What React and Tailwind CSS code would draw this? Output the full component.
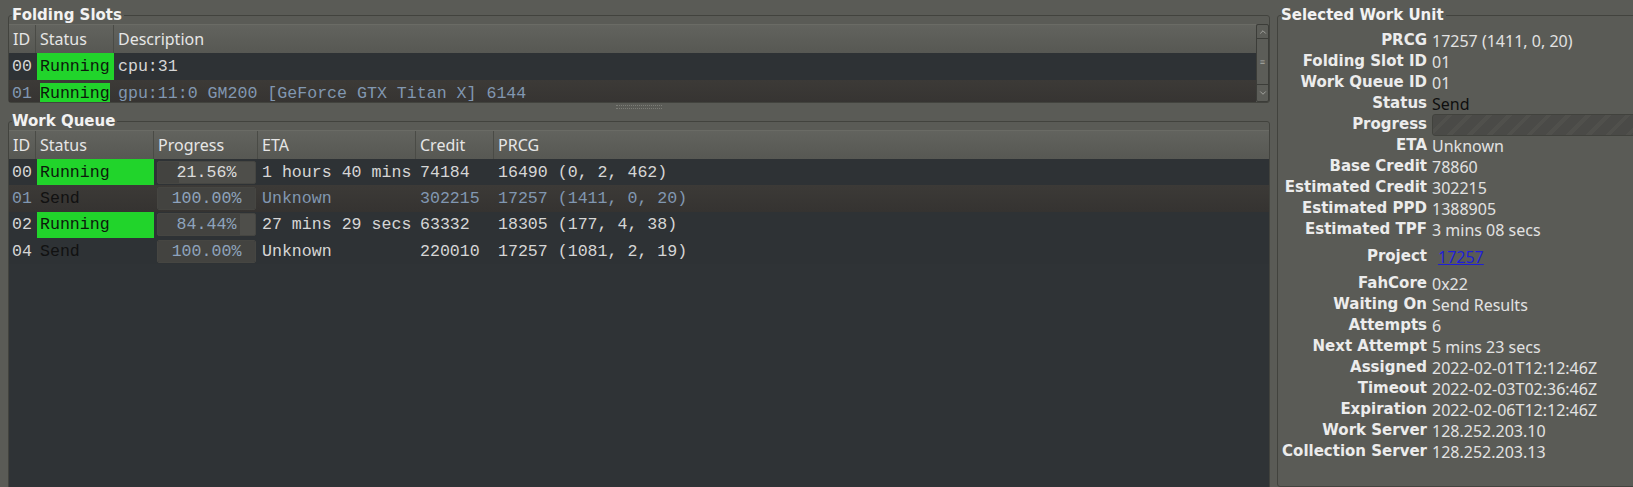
import React from 'react';
import { ChevronUp, ChevronDown } from 'lucide-react';

const MONO = "font-['Liberation_Mono',monospace] text-[16.6px]";
const SANS = "font-['Noto_Sans',sans-serif] text-[16px]";
const BOLD = "font-['DejaVu_Sans',sans-serif] font-bold text-[15px]";

const slots = [
  { id: '00', status: 'Running', desc: 'cpu:31' },
  { id: '01', status: 'Running', desc: 'gpu:11:0 GM200 [GeForce GTX Titan X] 6144', selected: true },
];

const queue = [
  { id: '00', status: 'Running', progress: 21.56, eta: '1 hours 40 mins', credit: '74184', prcg: '16490 (0, 2, 462)' },
  { id: '01', status: 'Send', progress: 100, eta: 'Unknown', credit: '302215', prcg: '17257 (1411, 0, 20)', selected: true },
  { id: '02', status: 'Running', progress: 84.44, eta: '27 mins 29 secs', credit: '63332', prcg: '18305 (177, 4, 38)' },
  { id: '04', status: 'Send', progress: 100, eta: 'Unknown', credit: '220010', prcg: '17257 (1081, 2, 19)' },
];

const details = [
  ['PRCG', '17257 (1411, 0, 20)'],
  ['Folding Slot ID', '01'],
  ['Work Queue ID', '01'],
  ['Status', 'Send', 'dark'],
  ['Progress', null, 'bar'],
  ['ETA', 'Unknown'],
  ['Base Credit', '78860'],
  ['Estimated Credit', '302215'],
  ['Estimated PPD', '1388905'],
  ['Estimated TPF', '3 mins 08 secs'],
  ['Project', '17257', 'link'],
  ['FahCore', '0x22'],
  ['Waiting On', 'Send Results'],
  ['Attempts', '6'],
  ['Next Attempt', '5 mins 23 secs'],
  ['Assigned', '2022-02-01T12:12:46Z'],
  ['Timeout', '2022-02-03T02:36:46Z'],
  ['Expiration', '2022-02-06T12:12:46Z'],
  ['Work Server', '128.252.203.10'],
  ['Collection Server', '128.252.203.13'],
];

function Legend({ children }) {
  return (
    <legend className={`${BOLD} leading-[17px] text-[#f2f2f2] ml-[3px] pr-[2px]`}>{children}</legend>
  );
}

function HeaderCell({ w, children, last }) {
  return (
    <div
      className={`${w} h-full flex items-center px-[4px] text-[#e6e6e6] ${SANS} ${last ? '' : 'border-r border-[#4a4b46]'}`}
    >
      {children}
    </div>
  );
}

function Status({ text, inset }) {
  if (text === 'Running') {
    return (
      <div className={`h-full ${inset ? 'py-[3px] px-[4px]' : 'pl-[1px]'}`}>
        <div className={`h-full bg-[#21d42b] flex items-center pt-[2px] ${inset ? '' : 'pl-[3px]'} text-[#0c1a0c]`}>{text}</div>
      </div>
    );
  }
  return <div className="h-full flex items-center pt-[2px] pl-[4px] text-[#111111]">{text}</div>;
}

function ProgressBar({ value }) {
  const blue = value > 60;
  return (
    <div className="relative w-[99px] h-[23px] rounded-[2px] bg-[#4e4e4a] border border-[#464642] overflow-hidden">
      <div className="h-full bg-[#434340]" style={{ width: `${value}%` }} />
      <div
        className={`absolute inset-0 flex items-center justify-center pt-[2px] ${blue ? 'text-[#8ea3bd]' : 'text-[#dcdcdc]'}`}
      >
        {value.toFixed(2)}%
      </div>
    </div>
  );
}

function FoldingSlots() {
  return (
    <fieldset className="min-w-0 border border-[#42433e] rounded-[3px]">
      <Legend>Folding Slots</Legend>
      <div className="flex h-[78px] overflow-hidden">
        <div className="flex-1 flex flex-col">
          <div className="h-[29px] shrink-0 flex bg-gradient-to-b from-[#62635e] to-[#575853] border-t border-[#6a6b65]">
            <HeaderCell w="w-[27px]">ID</HeaderCell>
            <HeaderCell w="w-[78px]">Status</HeaderCell>
            <HeaderCell w="flex-1" last>Description</HeaderCell>
          </div>
          {slots.map((s) => (
            <div
              key={s.id}
              className={`h-[27px] shrink-0 flex ${MONO} ${
                s.selected ? 'bg-gradient-to-b from-[#3c3a37] to-[#353331] text-[#8197b1]' : 'bg-[#2e3235] text-[#d6d6d6]'
              }`}
            >
              <div className="w-[27px] flex items-center pt-[2px] pl-[3px]">{s.id}</div>
              <div className="w-[78px]">
                <Status text={s.status} inset={s.selected} />
              </div>
              <div className="flex-1 flex items-center pt-[2px] pl-[4px]">{s.desc}</div>
            </div>
          ))}
        </div>
        <div className="w-[13px] flex flex-col rounded-[2px] border border-[#3c3d39] bg-[#5c5d58]">
          <div className="h-[14px] flex items-center justify-center border-b border-[#3c3d39]">
            <ChevronUp size={10} strokeWidth={1.5} color="#c9c9c4" />
          </div>
          <div className="flex-1 flex items-center justify-center text-[#a9aaa4] text-[9px] leading-none">≡</div>
          <div className="h-[17px] flex items-center justify-center border-t border-[#3c3d39]">
            <ChevronDown size={10} strokeWidth={1.5} color="#c9c9c4" />
          </div>
        </div>
      </div>
    </fieldset>
  );
}

function WorkQueue() {
  return (
    <fieldset className="min-w-0 flex-1 flex flex-col border border-[#42433e] rounded-[3px]">
      <Legend>Work Queue</Legend>
      <div className="h-[360px] flex flex-col bg-[#2f3336]">
        <div className="h-[29px] shrink-0 flex bg-gradient-to-b from-[#62635e] to-[#575853] border-t border-[#6a6b65]">
          <HeaderCell w="w-[27px]">ID</HeaderCell>
          <HeaderCell w="w-[118px]">Status</HeaderCell>
          <HeaderCell w="w-[104px]">Progress</HeaderCell>
          <HeaderCell w="w-[158px]">ETA</HeaderCell>
          <HeaderCell w="w-[78px]">Credit</HeaderCell>
          <HeaderCell w="flex-1" last>PRCG</HeaderCell>
        </div>
        {queue.map((q) => {
          const dim = q.selected ? 'text-[#8197b1]' : 'text-[#d6d6d6]';
          return (
            <div
              key={q.id}
              className={`h-[26.3px] shrink-0 flex ${MONO} ${
                q.selected ? 'bg-gradient-to-b from-[#3c3a37] to-[#353331]' : 'bg-[#2e3235]'
              }`}
            >
              <div className={`w-[27px] flex items-center pt-[2px] pl-[3px] ${dim}`}>{q.id}</div>
              <div className="w-[118px]">
                <Status text={q.status} />
              </div>
              <div className="w-[104px] flex items-center pl-[3px]">
                <ProgressBar value={q.progress} />
              </div>
              <div className={`w-[158px] flex items-center pt-[2px] pl-[4px] ${dim}`}>{q.eta}</div>
              <div className={`w-[78px] flex items-center pt-[2px] pl-[4px] ${dim}`}>{q.credit}</div>
              <div className={`flex-1 flex items-center pt-[2px] pl-[4px] ${dim}`}>{q.prcg}</div>
            </div>
          );
        })}
      </div>
    </fieldset>
  );
}

function DetailValue({ value, kind }) {
  if (kind === 'bar') {
    return (
      <div className="h-[22px] w-[260px] rounded-l-[3px] border border-[#41423d] bg-[repeating-linear-gradient(135deg,#4a4a47_0px,#4a4a47_10px,#50504c_10px,#50504c_14px)]" />
    );
  }
  if (kind === 'link') {
    return <span className="ml-[6px] text-[#1f1fd6] underline">{value}</span>;
  }
  return <span className={kind === 'dark' ? 'text-[#0e0e0e]' : 'text-[#e2e2e2]'}>{value}</span>;
}

function SelectedWorkUnit() {
  return (
    <fieldset className="min-w-0 w-[362px] shrink-0 self-stretch border border-[#42433e] rounded-[3px]">
      <Legend>Selected Work Unit</Legend>
      <div className="grid grid-cols-[149px_1fr] gap-x-[5px] pt-[6px]">
        {details.map(([label, value, kind]) => (
          <div key={label} className="contents">
            <div
              className={`${BOLD} text-[#ececec] text-right flex items-center justify-end ${
                kind === 'link' ? 'h-[33px]' : 'h-[21px]'
              }`}
            >
              {label}
            </div>
            <div className={`${SANS} flex items-center whitespace-nowrap ${kind === 'link' ? 'h-[33px]' : 'h-[21px]'}`}>
              <DetailValue value={value} kind={kind} />
            </div>
          </div>
        ))}
      </div>
    </fieldset>
  );
}

export default function App() {
  return (
    <div className="w-[1633px] h-[487px] overflow-hidden bg-[#5a5b56] flex pl-[8px] pt-[7px] gap-x-[7px]">
      <div className="w-[1262px] shrink-0 flex flex-col">
        <FoldingSlots />
        <div className="h-[10px] shrink-0 flex justify-center pt-[2px]">
          <div className="h-[4px] w-[46px] border-y border-dotted border-[#7c7d77]" />
        </div>
        <WorkQueue />
      </div>
      <SelectedWorkUnit />
    </div>
  );
}
